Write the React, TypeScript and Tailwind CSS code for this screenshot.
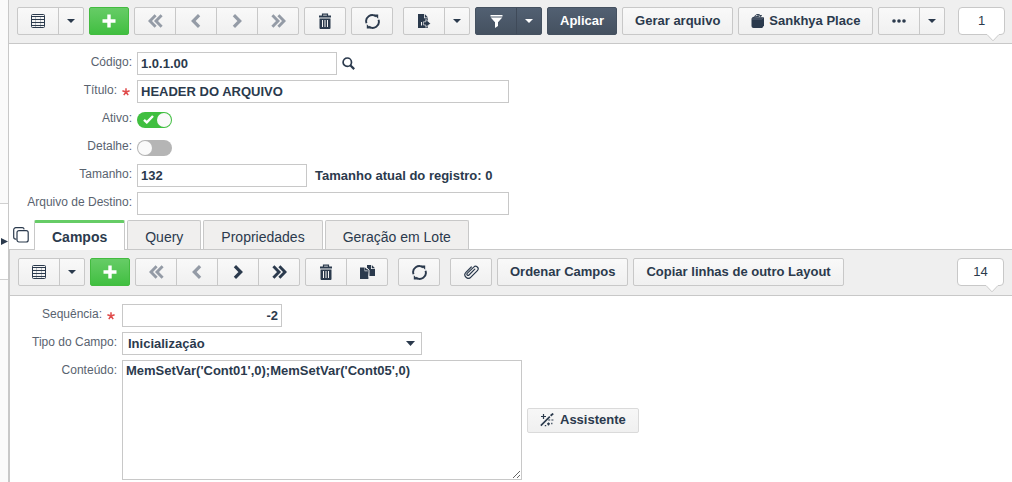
import React, { useState } from 'react';
import clsx from 'clsx';

type IconProps = { className?: string };

const GridIcon = () => (
  <svg width="14" height="14" viewBox="0 0 14 14" fill="none" stroke="currentColor">
    <rect x="0.5" y="0.5" width="13" height="13" rx="1" />
    <path d="M1 2.5h12M1 5.5h12M1 8.5h12M1 11.5h12" />
    <path d="M4.5 3v10M9.5 3v10" strokeOpacity="0.3" />
  </svg>
);

const CaretIcon = ({ className }: IconProps) => (
  <svg width="8" height="4" viewBox="0 0 8 4" className={className}>
    <path d="M0 0h8L4 4z" fill="currentColor" />
  </svg>
);

const PlusIcon = () => (
  <svg width="14" height="14" viewBox="0 0 14 14">
    <path d="M5.3 0.5h3.4v4.8h4.8v3.4H8.7v4.8H5.3V8.7H0.5V5.3h4.8z" fill="currentColor" />
  </svg>
);

const ChevronIcon = ({ className }: IconProps) => (
  <svg width="10" height="14" viewBox="0 0 10 14" fill="none" stroke="currentColor" strokeWidth="3.2" className={className}>
    <path d="M1.9 1.2 7.7 7 1.9 12.8" />
  </svg>
);

const DoubleChevronIcon = ({ className }: IconProps) => (
  <svg width="15" height="14" viewBox="0 0 15 14" fill="none" stroke="currentColor" strokeWidth="2.9" className={className}>
    <path d="M1.4 1.2 7 7 1.4 12.8M7.4 1.2 13 7 7.4 12.8" />
  </svg>
);

const TrashIcon = () => (
  <svg width="12" height="16" viewBox="0 0 12 16">
    <path d="M3.5 3V1.2h5V3" fill="none" stroke="currentColor" strokeWidth="1.2" />
    <path d="M0 2.6h12v1.8H0zM0.5 5.4h11V15a1 1 0 0 1-1 1h-9a1 1 0 0 1-1-1z" fill="currentColor" />
    <path d="M3.5 7v7M6 7v7M8.5 7v7" stroke="#f5f5f5" />
  </svg>
);

const RefreshIcon = () => (
  <svg width="15" height="15" viewBox="0 0 15 15" fill="none" stroke="currentColor" strokeWidth="1.9">
    <path d="M1.5 9.2A6.1 6.1 0 0 1 11 2.4" />
    <path d="M13.5 5.8A6.1 6.1 0 0 1 4 12.6" />
    <path d="M9 0.4h4.2v4.4zM6 14.6H1.8v-4.4z" fill="currentColor" stroke="none" />
  </svg>
);

const ExportIcon = () => (
  <svg width="14" height="14" viewBox="0 0 14 14">
    <path d="M1 0h6v4.3h3.8V14H1z" fill="currentColor" />
    <path d="M7.8 0 11 3.4H7.8z" fill="currentColor" />
    <path d="M6.4 7.8h2.4V5.4l4.8 4-4.8 4V11H6.4z" fill="currentColor" stroke="#f5f5f5" strokeWidth="0.7" />
    <path d="M4.5 8v3.5" stroke="#f5f5f5" />
  </svg>
);

const FilterIcon = () => (
  <svg width="13" height="13" viewBox="0 0 13 13">
    <path d="M0.5 0h12v1.6h-12zM0.7 2.6h11.6L8 7.2V11l-3 2V7.2z" fill="currentColor" />
  </svg>
);

const BagIcon = () => (
  <svg width="14" height="14" viewBox="0 0 14 14">
    <path d="M1.5 3.6 10.8 1.4M3.8 3C4 1 5.4 0.5 7 0.5c2 0 2.8 1 2.8 2.8M7 3V1" fill="none" stroke="currentColor" />
    <path d="M0.5 4.6 2 3.2h10l1 0.4v8L11.2 14H2.5a2 2 0 0 1-2-2z" fill="currentColor" />
    <path d="M1.2 5h9.4l1.8-1.4" fill="none" stroke="#8a93a0" strokeWidth="0.5" />
  </svg>
);

const DotsIcon = () => (
  <svg width="14" height="4" viewBox="0 0 14 4" fill="currentColor">
    <circle cx="2" cy="2" r="1.8" />
    <circle cx="7" cy="2" r="1.8" />
    <circle cx="12" cy="2" r="1.8" />
  </svg>
);

const SearchIcon = () => (
  <svg width="13" height="13" viewBox="0 0 13 13" fill="none" stroke="currentColor">
    <circle cx="5.3" cy="5.2" r="4.2" strokeWidth="1.7" />
    <path d="M8.3 8.2 12.2 12.1" strokeWidth="2.2" />
  </svg>
);

const DuplicateIcon = () => (
  <svg width="15" height="14" viewBox="0 0 15 14">
    <path d="M7 3V0h4v4h4v7H9z" fill="currentColor" />
    <path d="M11.8 0 15 3.2h-3.2z" fill="currentColor" />
    <path d="M0 2.4h4.6v3.8h3.8V14H0z" fill="currentColor" />
    <path d="M5 2.4 8.4 5.6H5z" fill="currentColor" />
    <path d="M5.8 1.8 9 5v7" fill="none" stroke="#f5f5f5" strokeWidth="0.9" />
  </svg>
);

const ClipIcon = () => (
  <svg width="15" height="14" viewBox="0 0 15 14" fill="none" stroke="currentColor" strokeWidth="1.2" strokeLinecap="round">
    <path d="M10.8 4.2 5 10a1.2 1.2 0 0 1-1.8-1.7l6.5-6.2a2.5 2.5 0 0 1 3.7 3.5l-6.5 6.6a3.4 3.4 0 0 1-5-4.8L7.3 2" />
  </svg>
);

const CopyIcon = () => (
  <svg width="16" height="16" viewBox="0 0 16 16" fill="none" stroke="currentColor" strokeWidth="1.2">
    <path d="M3.4 12.2h-.6A2.2 2.2 0 0 1 .7 10V2.8A2.1 2.1 0 0 1 2.8.7H9a2.1 2.1 0 0 1 2.2 1.6" />
    <rect x="4" y="3.6" width="11.2" height="11.4" rx="2" />
  </svg>
);

const WandIcon = () => (
  <svg width="14" height="14" viewBox="0 0 14 14" fill="none" stroke="currentColor">
    <path d="M0.8 12.6 9.8 3.6" strokeWidth="1.6" />
    <path d="M10.6 2.8 13.2 0.6" strokeWidth="1.8" />
    <path d="M3.5 1v5M1 3.5h5M8.2 7h2M11.4 7h2M8.5 9.4v3M7 10.9h3M11.8 9.8v1.5M4.8 12.6h1.4" strokeWidth="1.2" />
  </svg>
);

const CheckIcon = ({ className }: IconProps) => (
  <svg width="11" height="9" viewBox="0 0 11 9" fill="none" stroke="currentColor" strokeWidth="2.4" className={className}>
    <path d="M1 4.8 3.8 7.4 10 1" />
  </svg>
);

const RequiredIcon = () => (
  <svg width="8" height="8" viewBox="0 0 8 8" className="mt-2 mr-[2px] ml-[5px] text-[#e04b4b]">
    <path
      d="M4 4V0.2M4 4 0.4 2.8M4 4l3.6-1.2M4 4 1.8 7.2M4 4l2.2 3.2"
      fill="none"
      stroke="currentColor"
      strokeWidth="1.5"
    />
  </svg>
);

const Group: React.FC<{ children: React.ReactNode; dark?: boolean; className?: string }> = ({ children, dark, className }) => (
  <div
    className={clsx(
      'flex h-7 shrink-0 overflow-hidden rounded-xs border divide-x',
      dark
        ? 'border-[#455160] divide-[#3f4a59] bg-linear-to-b from-[#526072] to-[#455160] text-white'
        : 'border-[#c8c8c8] divide-[#c8c8c8] bg-linear-to-b from-[#f9f9f9] to-[#f0f0f0]',
      className
    )}
  >
    {children}
  </div>
);

const IconButton: React.FC<{ label: string; children: React.ReactNode; disabled?: boolean; className?: string }> = ({
  label,
  children,
  disabled,
  className = 'w-[41px]'
}) => (
  <button
    type="button"
    aria-label={label}
    disabled={disabled}
    className={clsx('flex items-center justify-center disabled:text-[#949ba6]', className)}
  >
    {children}
  </button>
);

const AddButton = () => (
  <button
    type="button"
    aria-label="Adicionar"
    className="flex h-7 w-10 shrink-0 items-center justify-center rounded-xs border border-[#43bb40] bg-linear-to-b from-[#66cc66] to-[#40bf40] text-white"
  >
    <PlusIcon />
  </button>
);

const Navigation: React.FC<{ last?: boolean }> = ({ last = false }) => (
  <Group>
    <IconButton label="Primeiro" disabled>
      <DoubleChevronIcon className="rotate-180" />
    </IconButton>
    <IconButton label="Anterior" disabled>
      <ChevronIcon className="rotate-180" />
    </IconButton>
    <IconButton label="Próximo" disabled={last}>
      <ChevronIcon />
    </IconButton>
    <IconButton label="Último" disabled={last} className="w-10">
      <DoubleChevronIcon />
    </IconButton>
  </Group>
);

const TextButton: React.FC<{ children: React.ReactNode }> = ({ children }) => (
  <button type="button" className="flex h-full items-center gap-1 px-3 font-bold whitespace-nowrap">
    {children}
  </button>
);

const Counter: React.FC<{ value: number }> = ({ value }) => (
  <div className="relative ml-auto flex h-7 w-[47px] shrink-0 items-center justify-center rounded-sm border border-[#c8c8c8] bg-white">
    {value}
    <svg width="12" height="8" viewBox="0 0 12 8" className="absolute top-[26px] right-[5px]">
      <path d="M0 0h12v1L6 7 0 1z" fill="#fff" />
      <path d="M0 0.5 6 6.8 12 0.5" fill="none" stroke="#c8c8c8" />
    </svg>
  </div>
);

const Field: React.FC<{
  id: string;
  label: string;
  required?: boolean;
  labelClass: string;
  children: React.ReactNode;
}> = ({ id, label, required, labelClass, children }) => (
  <div className="flex min-h-[23px] items-start gap-[5px]">
    <label htmlFor={id} className={clsx('flex shrink-0 justify-end text-xs leading-5 text-[#59636f]', labelClass)}>
      {label}
      {required && <RequiredIcon />}
    </label>
    {children}
  </div>
);

const Toggle: React.FC<{ id: string; initial: boolean }> = ({ id, initial }) => {
  const [on, setOn] = useState(initial);

  return (
    <span className="relative mt-1 flex">
      <input
        id={id}
        type="checkbox"
        checked={on}
        onChange={(e) => setOn(e.target.checked)}
        className="flex h-4 w-[35px] appearance-none items-center rounded-full bg-[#b5b5b5] px-px before:size-[14px] before:rounded-full before:bg-[#fafafa] checked:justify-end checked:bg-[#40bf40]"
      />
      {on && <CheckIcon className="pointer-events-none absolute top-[3px] left-[6px] text-white" />}
    </span>
  );
};

const inputClass = 'h-[23px] border border-[#c8c8c8] bg-white px-[3px] font-bold';
const tabs = ['Campos', 'Query', 'Propriedades', 'Geração em Lote'];

const App: React.FC = () => {
  const [active, setActive] = useState('Campos');

  return (
    <div className="flex min-h-screen bg-white font-['Liberation_Sans',Arial,sans-serif] text-[13px] leading-4 text-[#2b3a4d]">
      {/* Painel lateral recolhido */}
      <aside className="flex w-[9px] shrink-0 flex-col border-r border-[#c8c8c8] bg-[#fafafa]">
        <button
          type="button"
          aria-label="Expandir painel"
          className="mt-[203px] flex h-[77px] items-center border-y border-[#d0d0d0] bg-white pl-px"
        >
          <svg width="7" height="7" viewBox="0 0 7 7">
            <path d="M0 0v7l7-3.5z" fill="currentColor" />
          </svg>
        </button>
      </aside>

      <main className="flex min-w-0 flex-1 flex-col">
        <div className="flex gap-[5px] border-b border-[#c8c8c8] bg-[#efefef] pt-[7px] pr-[7px] pb-2 pl-2">
          <Group>
            <IconButton label="Modo grade"><GridIcon /></IconButton>
            <IconButton label="Opções da grade" className="w-6"><CaretIcon /></IconButton>
          </Group>
          <AddButton />
          <Navigation last />
          <Group>
            <IconButton label="Excluir" className="w-10"><TrashIcon /></IconButton>
          </Group>
          <Group className="mr-[5px]">
            <IconButton label="Atualizar" className="w-10"><RefreshIcon /></IconButton>
          </Group>
          <Group>
            <IconButton label="Exportar"><ExportIcon /></IconButton>
            <IconButton label="Opções de exportação" className="w-6"><CaretIcon /></IconButton>
          </Group>
          <Group dark>
            <IconButton label="Filtro"><FilterIcon /></IconButton>
            <IconButton label="Opções de filtro" className="w-6"><CaretIcon /></IconButton>
          </Group>
          <Group dark>
            <TextButton>Aplicar</TextButton>
          </Group>
          <Group>
            <TextButton>Gerar arquivo</TextButton>
          </Group>
          <Group>
            <TextButton><BagIcon />Sankhya Place</TextButton>
          </Group>
          <Group>
            <IconButton label="Mais"><DotsIcon /></IconButton>
            <IconButton label="Mais opções" className="w-6"><CaretIcon /></IconButton>
          </Group>
          <Counter value={1} />
        </div>

        <form className="flex flex-col gap-[5px] pt-2 pb-[5px]">
          <Field id="codigo" label="Código:" labelClass="w-[123px]">
            <input id="codigo" defaultValue="1.0.1.00" className={clsx(inputClass, 'w-[200px]')} />
            <button type="button" aria-label="Pesquisar" className="flex h-[23px] items-center">
              <SearchIcon />
            </button>
          </Field>
          <Field id="titulo" label="Título:" required labelClass="w-[123px]">
            <input id="titulo" defaultValue="HEADER DO ARQUIVO" className={clsx(inputClass, 'w-[372px]')} />
          </Field>
          <Field id="ativo" label="Ativo:" labelClass="w-[123px]">
            <Toggle id="ativo" initial />
          </Field>
          <Field id="detalhe" label="Detalhe:" labelClass="w-[123px]">
            <Toggle id="detalhe" initial={false} />
          </Field>
          <Field id="tamanho" label="Tamanho:" labelClass="w-[123px]">
            <input id="tamanho" defaultValue="132" className={clsx(inputClass, 'w-[170px]')} />
            <span className="pl-[3px] leading-[23px] font-bold">Tamanho atual do registro: 0</span>
          </Field>
          <Field id="destino" label="Arquivo de Destino:" labelClass="w-[123px]">
            <input id="destino" className={clsx(inputClass, 'w-[372px]')} />
          </Field>
        </form>

        {/* Abas */}
        <div className="flex h-[29px] items-stretch gap-[2px]">
          <button type="button" aria-label="Duplicar" className="flex w-[23px] items-center justify-center">
            <CopyIcon />
          </button>
          {tabs.map((tab) => (
            <button
              key={tab}
              type="button"
              onClick={() => setActive(tab)}
              className={clsx(
                'relative rounded-t-xs border-x px-[17px] text-sm',
                tab === active
                  ? '-mb-px border-t-3 border-[#c8c8c8] border-t-[#66cc66] bg-white font-bold'
                  : 'border-t border-[#c8c8c8] bg-[#f0efee] pt-1'
              )}
            >
              {tab}
            </button>
          ))}
        </div>

        <section className="flex-1 border-t border-l border-[#c8c8c8]">
          <div className="flex gap-[5px] border-b border-[#c8c8c8] bg-[#efefef] pt-2 pr-2 pb-[9px] pl-2">
            <Group>
              <IconButton label="Modo grade"><GridIcon /></IconButton>
              <IconButton label="Opções da grade" className="w-6"><CaretIcon /></IconButton>
            </Group>
            <AddButton />
            <Navigation />
            <Group className="mr-[5px]">
              <IconButton label="Excluir"><TrashIcon /></IconButton>
              <IconButton label="Duplicar" className="w-10"><DuplicateIcon /></IconButton>
            </Group>
            <Group className="mr-[5px]">
              <IconButton label="Atualizar" className="w-10"><RefreshIcon /></IconButton>
            </Group>
            <Group>
              <IconButton label="Anexos" className="w-10"><ClipIcon /></IconButton>
            </Group>
            <Group>
              <TextButton>Ordenar Campos</TextButton>
            </Group>
            <Group>
              <TextButton>Copiar linhas de outro Layout</TextButton>
            </Group>
            <Counter value={14} />
          </div>

          <form className="flex flex-col gap-[5px] pt-2">
            <Field id="sequencia" label="Sequência:" required labelClass="w-[107px]">
              <input id="sequencia" defaultValue="-2" className={clsx(inputClass, 'w-[160px] text-right')} />
            </Field>
            <Field id="tipo" label="Tipo do Campo:" labelClass="w-[107px]">
              <div className="relative">
                <select id="tipo" className="block h-[23px] w-[300px] appearance-none border border-[#c8c8c8] bg-white px-[5px] font-bold">
                  <option>Inicialização</option>
                </select>
                <svg width="9" height="5" viewBox="0 0 9 5" className="pointer-events-none absolute top-[9px] right-[7px]">
                  <path d="M0 0h9L4.5 5z" fill="currentColor" />
                </svg>
              </div>
            </Field>
            <Field id="conteudo" label="Conteúdo:" labelClass="w-[107px]">
              <textarea
                id="conteudo"
                defaultValue="MemSetVar('Cont01',0);MemSetVar('Cont05',0)"
                className="h-[120px] w-[400px] border border-[#c8c8c8] px-[3px] py-[2px] font-bold"
              />
              <button
                type="button"
                className="flex h-[25px] items-center gap-[6px] self-center rounded-xs border border-[#dadada] bg-linear-to-b from-[#f7f7f7] to-[#f0f0f0] px-3 font-bold"
              >
                <WandIcon />
                Assistente
              </button>
            </Field>
          </form>
        </section>
      </main>
    </div>
  );
};

export default App;
